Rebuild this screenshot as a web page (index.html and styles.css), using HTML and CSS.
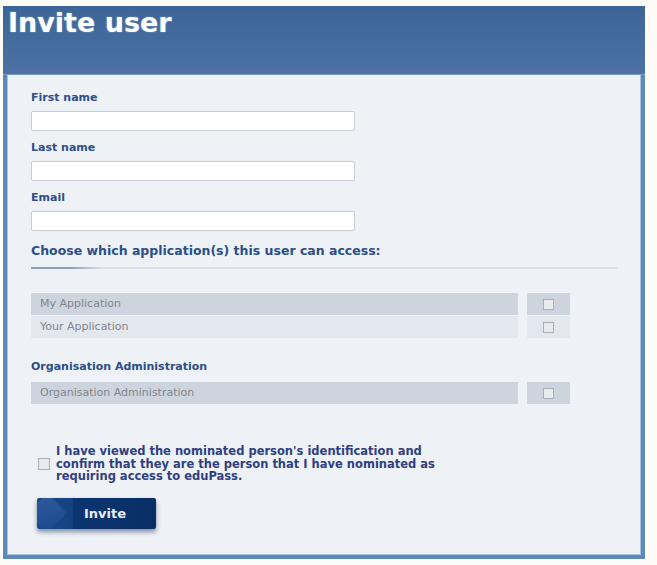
FILE: index.html
```html
<!DOCTYPE html>
<html lang="en">
<head>
    <meta charset="UTF-8">
    <meta name="viewport" content="width=device-width, initial-scale=1.0">
    <title>Invite user</title>
    <link rel="stylesheet" href="styles.css">
</head>
<body>
    <div class="panel">
        <div class="panel-header">
            <h1>Invite user</h1>
        </div>
        <div class="panel-body">
            <label class="field-label" for="firstName">First name</label>
            <input class="field-input" type="text" id="firstName" name="firstName">

            <label class="field-label" for="lastName">Last name</label>
            <input class="field-input" type="text" id="lastName" name="lastName">

            <label class="field-label" for="email">Email</label>
            <input class="field-input" type="text" id="email" name="email">

            <h2 class="section-title">Choose which application(s) this user can access:</h2>
            <div class="section-rule"></div>

            <div class="app-list">
                <div class="app-row dark">
                    <div class="app-name">My Application</div>
                    <div class="app-check"><span class="box"></span></div>
                </div>
                <div class="app-row light">
                    <div class="app-name">Your Application</div>
                    <div class="app-check"><span class="box"></span></div>
                </div>
            </div>

            <div class="sub-title">Organisation Administration</div>
            <div class="app-list">
                <div class="app-row dark">
                    <div class="app-name">Organisation Administration</div>
                    <div class="app-check"><span class="box"></span></div>
                </div>
            </div>

            <div class="consent">
                <span class="box consent-box"></span>
                <p>I have viewed the nominated person's identification and confirm that they are the person that I have nominated as requiring access to eduPass.</p>
            </div>

            <button class="invite-btn" type="button">Invite</button>
        </div>
    </div>
</body>
</html>
```

FILE: styles.css
```css
body {
    margin: 0;
    background: #fdfbf5;
    font-family: "DejaVu Sans", Verdana, sans-serif;
}
.panel {
    width: 642px;
    margin: 6px 0 0 3px;
}
.panel-header {
    height: 69px;
    background: linear-gradient(#3c6497, #4b72a2);
    border-bottom: 1px solid #7d9cc2;
    box-sizing: border-box;
}
.panel-header h1 {
    margin: 0;
    padding: 1px 0 0 5px;
    font-size: 27px;
    line-height: 32px;
    font-weight: bold;
    color: #ffffff;
    text-shadow: 0 0 2px rgba(255, 255, 255, 0.4);
}
.panel-body {
    background: #eef2f7;
    border: 4px solid #5e89b8;
    border-top: none;
    box-shadow: inset 1px 0 0 #a9c2de, inset -1px 0 0 #a9c2de, inset 0 -1px 0 #a9c2de;
    padding: 16px 24px 26px 24px;
}
.field-label {
    display: block;
    font-size: 11px;
    line-height: 14px;
    font-weight: bold;
    color: #2d4d8c;
    margin-bottom: 6px;
}
.field-input {
    display: block;
    width: 324px;
    height: 20px;
    box-sizing: border-box;
    border: 1px solid #c9cdd3;
    border-radius: 2px;
    background: #ffffff;
    box-shadow: 0 0 1px #dfe3e8;
    margin: 0 0 10px 0;
}
.section-title {
    margin: 12px 0 0 0;
    font-size: 12.5px;
    line-height: 16px;
    font-weight: bold;
    color: #2b4e87;
}
.section-rule {
    width: 587px;
    height: 2px;
    margin-top: 8px;
    background: linear-gradient(to right, #8d9fbd 0, #8d9fbd 40px, #d9e0e9 70px, #d9e0e9 100%);
}
.app-list {
    margin-top: 24px;
}
.app-row {
    display: flex;
    gap: 9px;
    height: 22px;
}
.app-row + .app-row {
    margin-top: 1px;
}
.app-name {
    width: 487px;
    padding-left: 9px;
    box-sizing: border-box;
    font-size: 11px;
    line-height: 22px;
    color: #80858e;
}
.app-check {
    width: 43px;
    display: flex;
    justify-content: center;
    align-items: center;
}
.dark .app-name, .dark .app-check {
    background: #ced4dd;
}
.light .app-name, .light .app-check {
    background: #e3e8ee;
}
.box {
    display: inline-block;
    width: 11px;
    height: 11px;
    box-sizing: border-box;
    border: 1px solid #a9aeb6;
    background: #e9ebee;
}
.sub-title {
    margin-top: 22px;
    font-size: 11px;
    line-height: 14px;
    font-weight: bold;
    color: #2b4e87;
}
.sub-title + .app-list {
    margin-top: 8px;
}
.consent {
    display: flex;
    align-items: center;
    margin-top: 41px;
    padding-left: 7px;
}
.consent-box {
    width: 12px;
    height: 12px;
    flex-shrink: 0;
    margin-right: 6px;
}
.consent p {
    margin: 0;
    width: 385px;
    font-size: 11.5px;
    line-height: 12.5px;
    font-weight: bold;
    color: #2f3f80;
}
.invite-btn {
    display: block;
    margin: 15px 0 0 6px;
    width: 119px;
    height: 31px;
    border: none;
    border-radius: 2px;
    padding: 0 0 0 17px;
    font-family: "DejaVu Sans", Verdana, sans-serif;
    font-size: 13px;
    font-weight: bold;
    color: #e8eefa;
    background: linear-gradient(to right, #1a4a8e 0, #14427f 30%, #0b3570 30%, #0a2f66 100%);
    box-shadow: 0 3px 5px rgba(0, 20, 60, 0.45);
    position: relative;
    overflow: hidden;
}
.invite-btn::before {
    content: "";
    position: absolute;
    top: 1.5px;
    left: -4px;
    width: 28px;
    height: 28px;
    transform: rotate(45deg);
    background: linear-gradient(135deg, rgba(70, 110, 175, 0.5), rgba(40, 80, 150, 0.15));
}
```
